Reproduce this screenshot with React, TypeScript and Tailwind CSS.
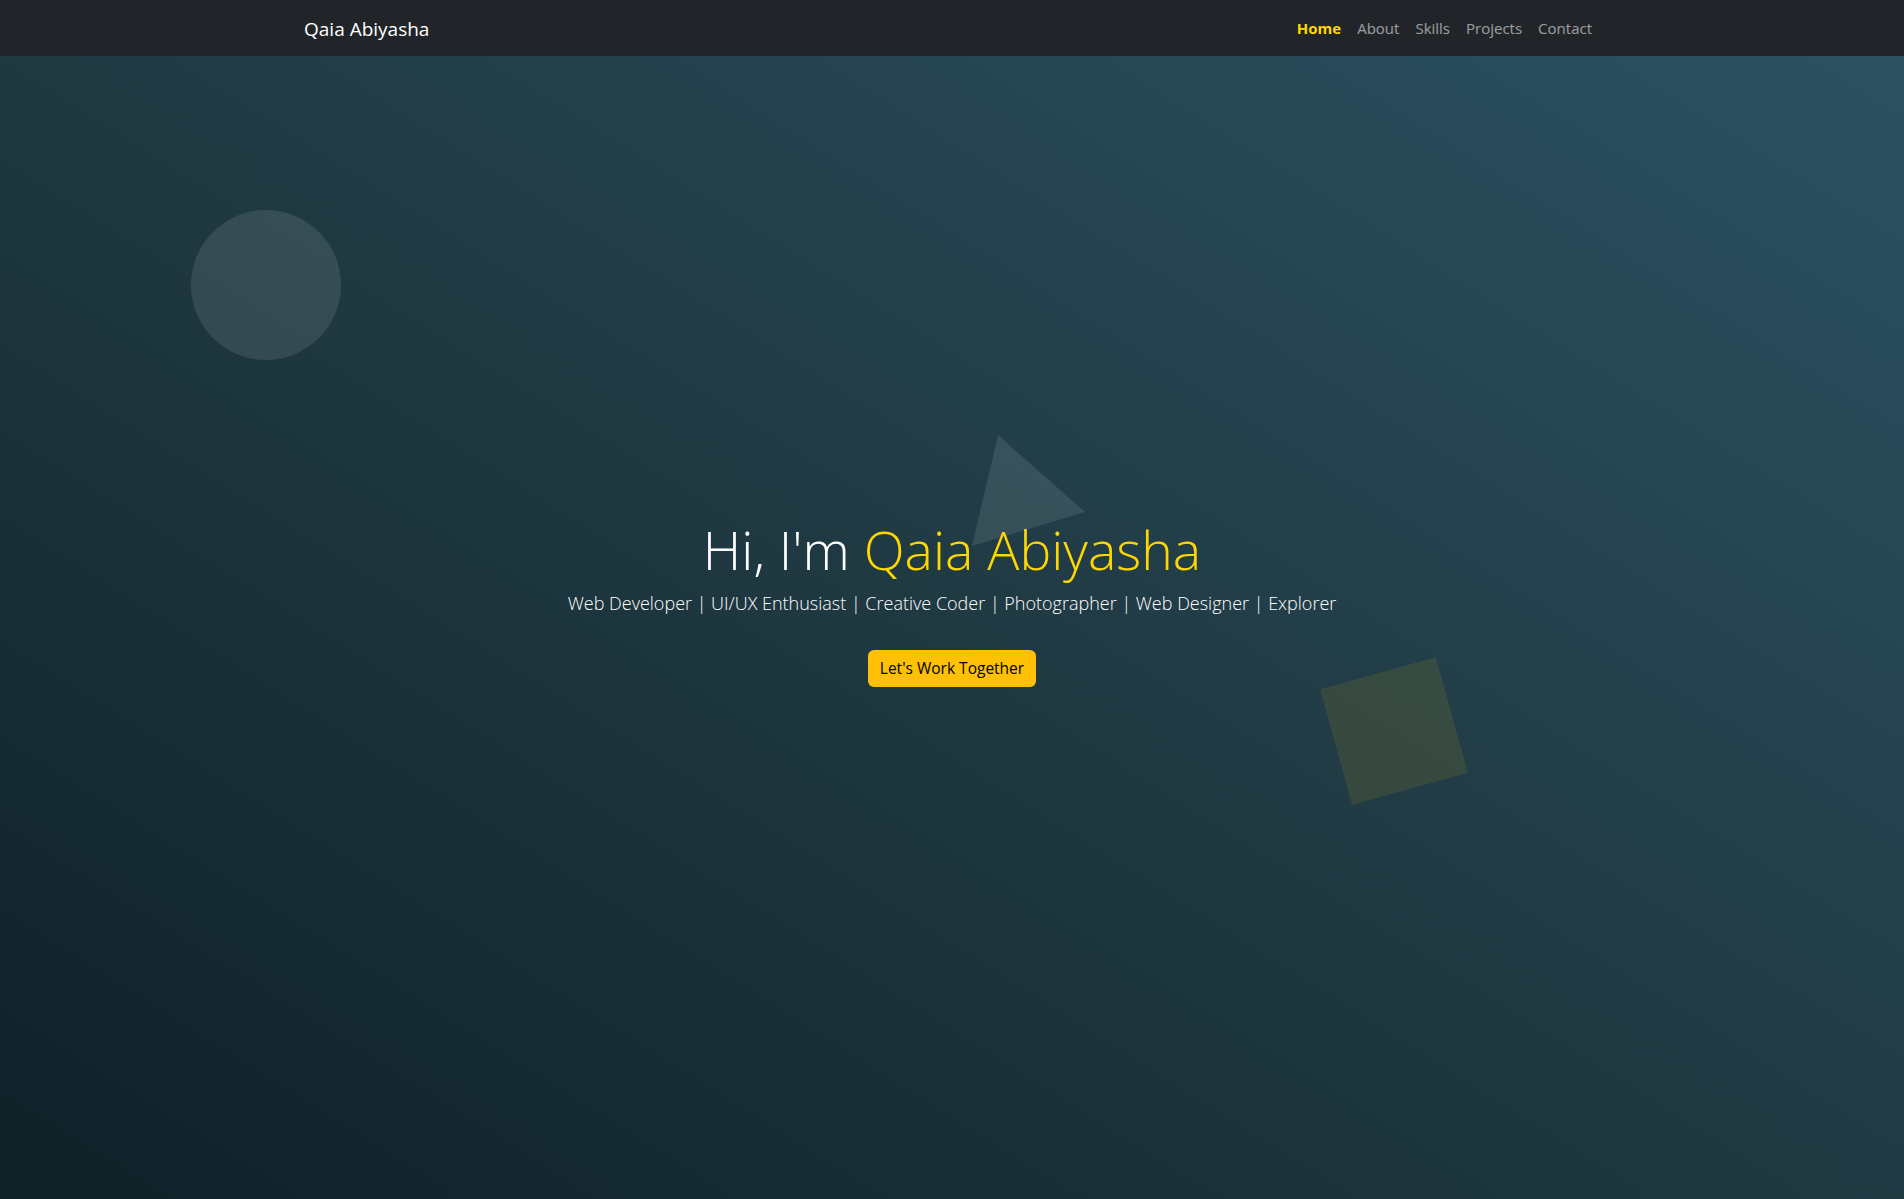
const links = ['Home', 'About', 'Skills', 'Projects', 'Contact']

export default function App() {
  return (
    <div className="relative min-h-screen overflow-hidden bg-linear-to-tr/srgb from-[#0f2027] via-[#203a43] to-[#2c5364] font-['Open_Sans',sans-serif] text-white">
      {/* Navbar */}
      <header className="fixed top-0 inset-x-0 z-50 bg-[#212529]">
        <div className="max-w-[1320px] mx-auto px-3 h-14 flex items-center justify-between">
          <a href="#" className="text-[19px] text-white py-[5px] mt-0.5">Qaia Abiyasha</a>
          <nav className="flex items-center">
            {links.map((l, i) => (
              <a
                key={l}
                href="#"
                className={i === 0
                  ? 'px-2 py-2 text-[15px] font-bold text-[#ffd700]'
                  : 'px-2 py-2 text-[15px] text-white/55'}
              >
                {l}
              </a>
            ))}
          </nav>
        </div>
      </header>

      {/* Floating shapes */}
      <div className="absolute left-[191px] top-[210px] w-[150px] h-[150px] rounded-full bg-white/10" />
      <svg className="absolute left-0 top-0 pointer-events-none" width="1904" height="1199">
        <polygon points="998,435 1085,512 972,546" fill="rgba(255,255,255,0.1)" />
      </svg>
      <div className="absolute left-[1334px] top-[671px] w-[120px] h-[120px] -rotate-[15.5deg] bg-[#ffc107]/10" />

      {/* Hero */}
      <section className="relative h-screen pt-1.5 flex flex-col items-center justify-center text-center">
        <h1 className="text-[53.5px] font-light leading-[1.2] mb-2">
          Hi, I'm <span className="text-[#ffd700]">Qaia Abiyasha</span>
        </h1>
        <p className="text-[18px] font-light leading-normal mb-[33px] text-white">
          Web Developer | UI/UX Enthusiast | Creative Coder | Photographer | Web Designer | Explorer
        </p>
        <a href="#" className="bg-[#ffc107] text-black text-[15.5px] leading-normal px-3 py-[7px] rounded-md">
          Let's Work Together
        </a>
      </section>
    </div>
  )
}
